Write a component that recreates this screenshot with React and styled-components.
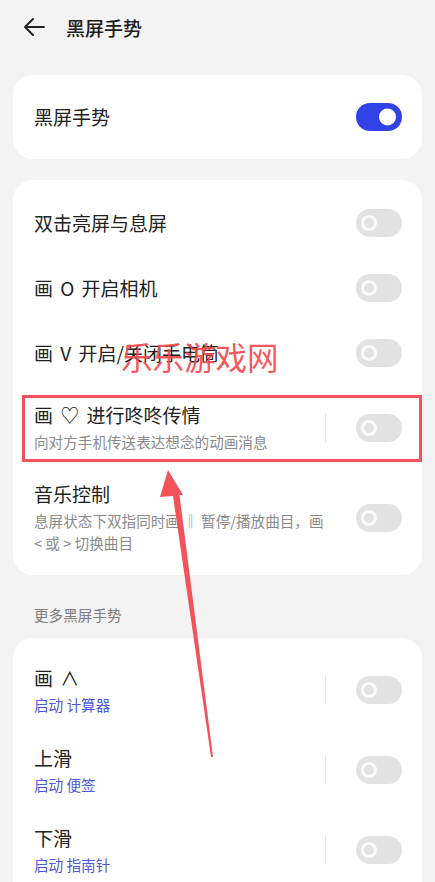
import React from "react";
import styled, { createGlobalStyle } from "styled-components";

const GlobalStyle = createGlobalStyle`
  html, body {
    margin: 0;
    padding: 0;
    background: #f3f3f3;
    font-family: "Noto Sans CJK SC", "Noto Sans", sans-serif;
  }
`;

const Page = styled.div`
  position: relative;
  width: 435px;
  height: 882px;
  overflow: hidden;
  background: #f3f3f3;
  padding: 0 13px;
  box-sizing: border-box;
`;

const Header = styled.div`
  display: flex;
  align-items: center;
  height: 54px;
  padding-left: 9px;
  gap: 20px;
`;

const Title = styled.div`
  font-size: 19px;
  font-weight: 500;
  color: #1e1e1e;
`;

const Card = styled.div`
  background: #fff;
  border-radius: 20px;
  padding: ${(p) => p.$pad || "0"};
  margin-top: ${(p) => p.$top || "0"};
`;

const Row = styled.div`
  display: flex;
  align-items: center;
  min-height: ${(p) => p.$h || 65}px;
  padding: 0 20px 0 21px;
  box-sizing: border-box;
`;

const TextCol = styled.div`
  flex: 1;
  display: flex;
  flex-direction: column;
  gap: 3px;
  padding-right: ${(p) => p.$pr || 0}px;
`;

const Label = styled.div`
  font-size: 19px;
  line-height: 26px;
  color: #222;
  word-spacing: 3px;
`;

const Sub = styled.div`
  font-size: 14.6px;
  line-height: 22px;
  color: ${(p) => (p.$blue ? "#4b59de" : "#8a8a8a")};
`;

const Divider = styled.div`
  width: 1px;
  height: 28px;
  background: #e4e4e4;
  margin-right: 30px;
`;

const Track = styled.div`
  position: relative;
  width: 46px;
  height: 28px;
  border-radius: 14px;
  background: ${(p) => (p.$on ? "#3142e6" : "#e2e2e2")};
  flex-shrink: 0;
`;

const Knob = styled.div`
  position: absolute;
  top: 50%;
  transform: translateY(-50%);
  border-radius: 50%;
  box-sizing: border-box;
  ${(p) =>
    p.$on
      ? `right: 6px; width: 17px; height: 17px; background: #fff;`
      : `left: 5px; width: 16px; height: 16px; border: 3.5px solid #fafafa;`}
`;

const SectionTitle = styled.div`
  font-size: 14.6px;
  color: #7c7c7c;
  padding: 29px 0 12px 21px;
  line-height: 22px;
`;

const Watermark = styled.div`
  position: absolute;
  left: 121px;
  top: 333px;
  font-size: 31.5px;
  font-weight: 400;
  color: rgba(244, 72, 78, 0.92);
  white-space: nowrap;
`;

const HighlightBox = styled.div`
  position: absolute;
  left: 22px;
  top: 395px;
  width: 400px;
  height: 67px;
  border: 3px solid #f4525a;
  box-sizing: border-box;
`;

const ArrowLayer = styled.svg`
  position: absolute;
  left: 0;
  top: 0;
  pointer-events: none;
`;

const Toggle = ({ on }) => (
  <Track $on={on}>
    <Knob $on={on} />
  </Track>
);

const BackArrow = () => (
  <svg width="24" height="20" viewBox="0 0 24 20">
    <path
      d="M22 10H3M11 2L3 10l8 8"
      fill="none"
      stroke="#222"
      strokeWidth="2"
      strokeLinecap="round"
      strokeLinejoin="round"
    />
  </svg>
);

const gestures = [
  { label: "双击亮屏与息屏" },
  { label: "画 O 开启相机" },
  { label: "画 V 开启/关闭手电筒" },
  { label: "画 ♡ 进行咚咚传情", sub: "向对方手机传送表达想念的动画消息", divider: true, h: 85 },
  {
    label: "音乐控制",
    sub: "息屏状态下双指同时画 ‖ 暂停/播放曲目，画 <\u00a0或\u00a0> 切换曲目",
    h: 95,
  },
];

const more = [
  { label: "画 ∧", sub: "启动 计算器" },
  { label: "上滑", sub: "启动 便签" },
  { label: "下滑", sub: "启动 指南针" },
];

export default function App() {
  return (
    <>
      <GlobalStyle />
      <Page>
        <Header>
          <BackArrow />
          <Title>黑屏手势</Title>
        </Header>

        <Card $top="21px">
          <Row $h={84}>
            <TextCol>
              <Label>黑屏手势</Label>
            </TextCol>
            <Toggle on />
          </Row>
        </Card>

        <Card $top="21px" $pad="10px 0">
          {gestures.map((g) => (
            <Row key={g.label} $h={g.h}>
              <TextCol $pr={g.sub && !g.divider ? 18 : 0}>
                <Label>{g.label}</Label>
                {g.sub && <Sub>{g.sub}</Sub>}
              </TextCol>
              {g.divider && <Divider />}
              <Toggle />
            </Row>
          ))}
        </Card>

        <SectionTitle>更多黑屏手势</SectionTitle>

        <Card $pad="12px 0">
          {more.map((g) => (
            <Row key={g.label} $h={80}>
              <TextCol>
                <Label>{g.label}</Label>
                <Sub $blue>{g.sub}</Sub>
              </TextCol>
              <Divider />
              <Toggle />
            </Row>
          ))}
        </Card>

        <Watermark>乐乐游戏网</Watermark>
        <HighlightBox />
        <ArrowLayer width="435" height="882" viewBox="0 0 435 882">
          <polygon
            points="168,470 183,495 179.5,495 213,757 211,757 173,496 160,497"
            fill="#f4525a"
          />
        </ArrowLayer>
      </Page>
    </>
  );
}
